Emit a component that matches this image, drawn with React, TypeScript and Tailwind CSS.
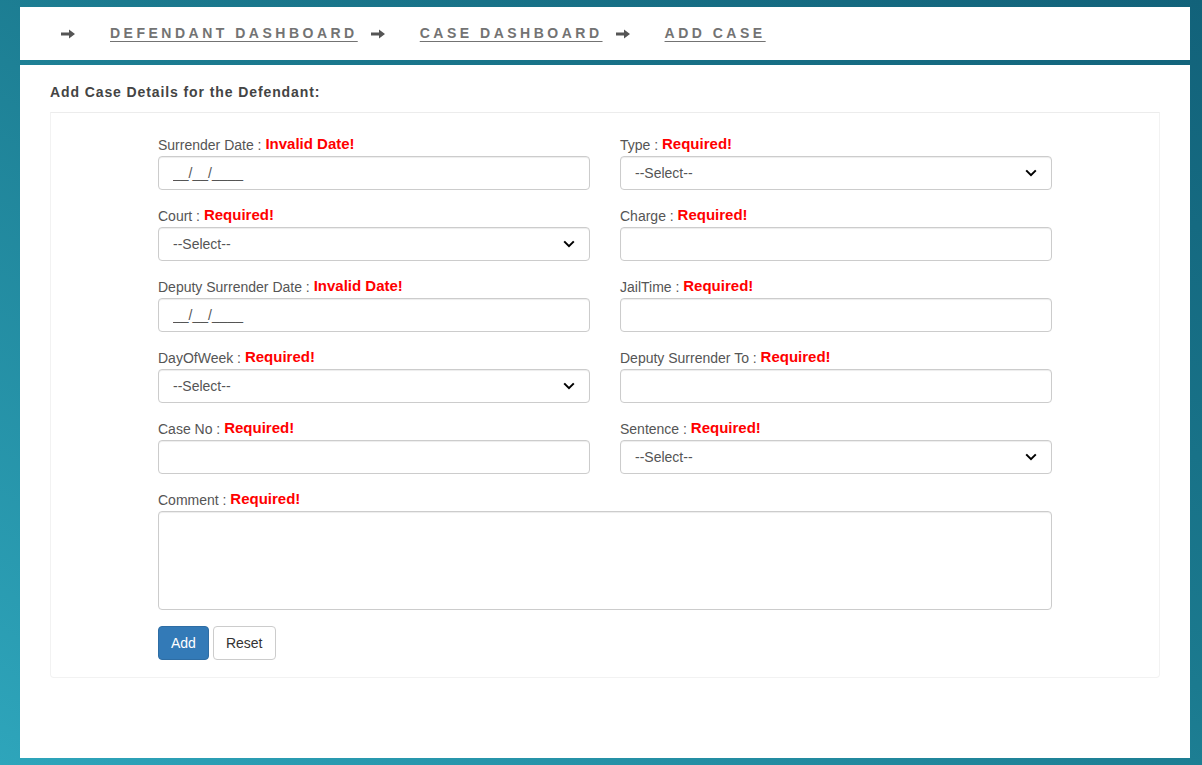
import React from 'react';

const font = { fontFamily: '"Liberation Sans", Arial, sans-serif' };

function Arrow() {
  return (
    <svg width="14" height="10" viewBox="0 0 14 10" className="shrink-0">
      <path d="M0 3.6h8V0.5L14 5l-6 4.5V6.4H0z" fill="#555" />
    </svg>
  );
}

function Chevron() {
  return (
    <svg width="12" height="8" viewBox="0 0 12 8" className="pointer-events-none absolute right-[15px] top-[13px]">
      <path d="M1.2 1.4l4.8 4.8 4.8-4.8" fill="none" stroke="#000" strokeWidth="2" />
    </svg>
  );
}

function Label({ text, error }: { text: string; error: string }) {
  return (
    <div className="mb-[1px] h-[21px] pt-[1px] text-[14px] leading-[20px] text-[#555]">
      {text} : <span className="relative -top-[1px] text-[15px] font-bold text-[#ff0000]">{error}</span>
    </div>
  );
}

const boxClass =
  'block h-[34px] w-full rounded-[4px] border border-[#ccc] bg-white px-[14px] text-[14px] text-[#555] shadow-[inset_0_1px_1px_rgba(0,0,0,0.075)] outline-none';

function TextField({ label, error, placeholder }: { label: string; error: string; placeholder?: string }) {
  return (
    <div className="mb-[15px]">
      <Label text={label} error={error} />
      <input className={boxClass} defaultValue={placeholder} style={font} />
    </div>
  );
}

function SelectField({ label, error }: { label: string; error: string }) {
  return (
    <div className="mb-[15px]">
      <Label text={label} error={error} />
      <div className="relative">
        <select className={boxClass + ' appearance-none'} style={font}>
          <option>--Select--</option>
        </select>
        <Chevron />
      </div>
    </div>
  );
}

export default function App() {
  const crumbs = ['DEFENDANT DASHBOARD', 'CASE DASHBOARD', 'ADD CASE'];

  return (
    <div
      className="flex h-[765px] w-full flex-col bg-[linear-gradient(to_bottom_left,#12627a_0%,#1b7a8f_45%,#2ea5bb_100%)] pb-[7px] pl-[20px] pr-[12px] pt-[7px]"
      style={font}
    >
      {/* Breadcrumb bar */}
      <div className="flex h-[53px] shrink-0 items-center bg-white pl-[41px]">
        {crumbs.map((c) => (
          <div key={c} className="flex items-center">
            <Arrow />
            <a className="ml-[35px] mr-[13px] text-[14px] font-bold tracking-[3.5px] text-[#737373] underline decoration-[#737373] underline-offset-[3px]">
              {c}
            </a>
          </div>
        ))}
      </div>

      {/* Main content */}
      <div className="mt-[5px] flex-1 bg-white px-[30px] pt-[17px]">
        <h3 className="pb-[10px] text-[14px] font-bold leading-[20px] tracking-[0.9px] text-[#444]">
          Add Case Details for the Defendant:
        </h3>

        <div className="rounded-b-[4px] border border-[#f2f2f2] border-t-[#ececec] pb-[17px] pt-[21px]">
          <div className="mx-auto w-[894px]">
            <div className="grid grid-cols-2 gap-x-[30px]">
              <TextField label="Surrender Date" error="Invalid Date!" placeholder="__/__/____" />
              <SelectField label="Type" error="Required!" />
              <SelectField label="Court" error="Required!" />
              <TextField label="Charge" error="Required!" />
              <TextField label="Deputy Surrender Date" error="Invalid Date!" placeholder="__/__/____" />
              <TextField label="JailTime" error="Required!" />
              <SelectField label="DayOfWeek" error="Required!" />
              <TextField label="Deputy Surrender To" error="Required!" />
              <TextField label="Case No" error="Required!" />
              <SelectField label="Sentence" error="Required!" />
            </div>

            <div className="mb-[16px]">
              <Label text="Comment" error="Required!" />
              <textarea
                className="block h-[99px] w-full resize-none rounded-[4px] border border-[#ccc] bg-white px-[12px] py-[6px] text-[14px] shadow-[inset_0_1px_1px_rgba(0,0,0,0.075)] outline-none"
              />
            </div>

            <div className="flex gap-[4px]">
              <button className="h-[34px] rounded-[4px] border border-[#2e6da4] bg-[#337ab7] px-[12px] text-[14px] text-white">
                Add
              </button>
              <button className="h-[34px] rounded-[4px] border border-[#ccc] bg-white px-[12px] text-[14px] text-[#333]">
                Reset
              </button>
            </div>
          </div>
        </div>
      </div>
    </div>
  );
}
